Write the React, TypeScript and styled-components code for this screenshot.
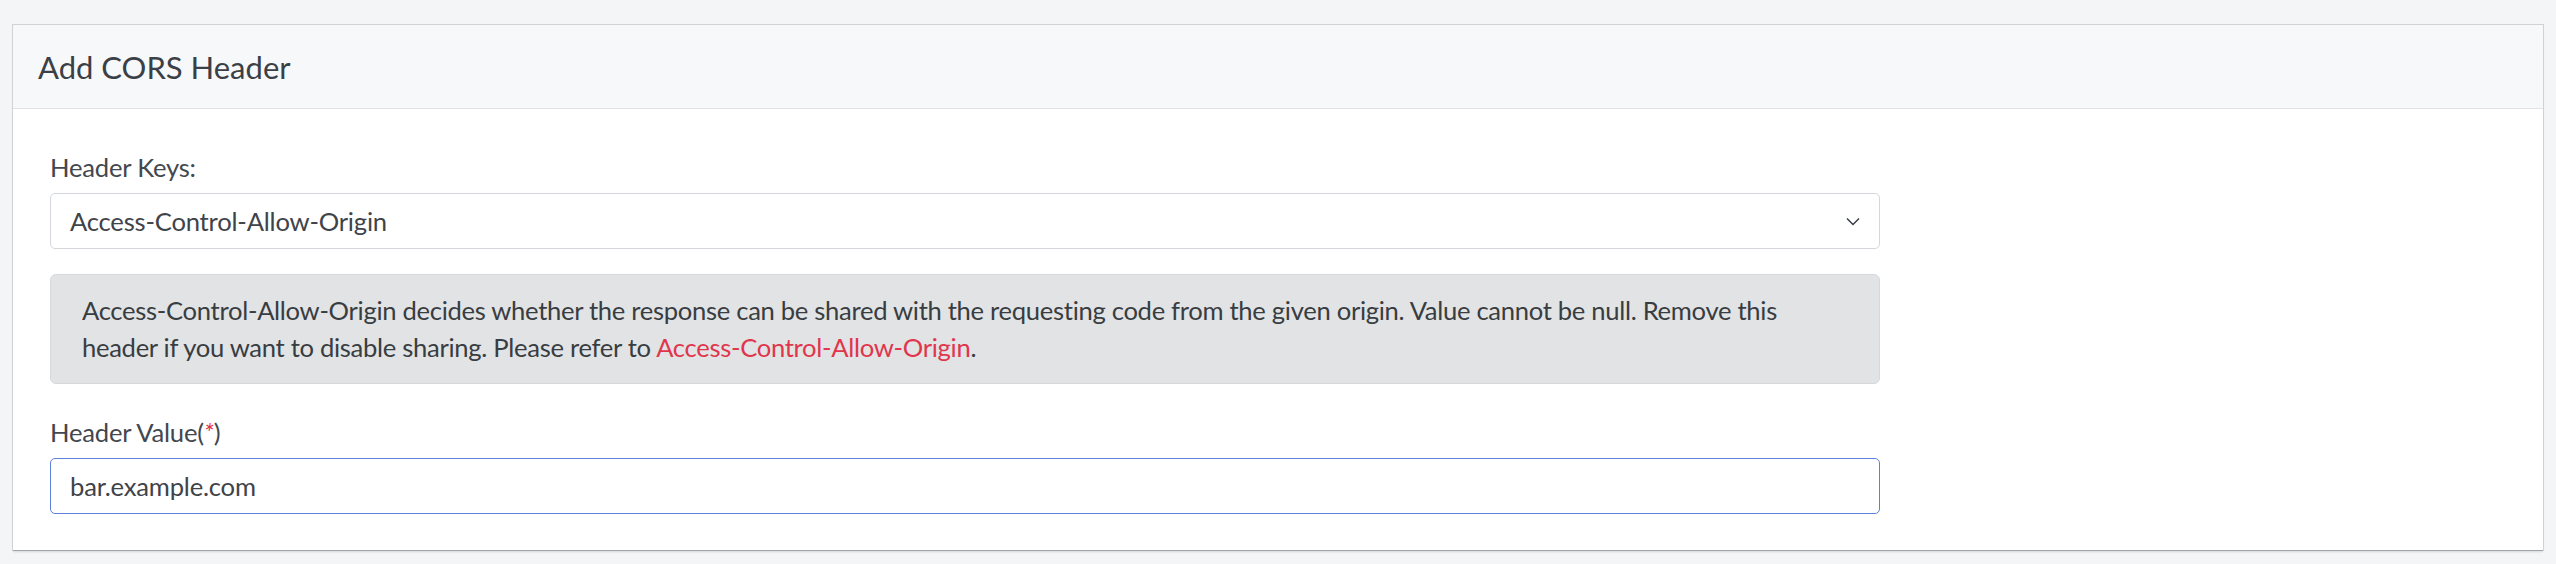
import React from "react";
import styled, { createGlobalStyle } from "styled-components";

const GlobalStyle = createGlobalStyle`
  html, body { margin: 0; padding: 0; }
  body {
    background: #f4f5f7;
    font-family: Lato, "Noto Sans", "Liberation Sans", sans-serif;
    color: #3f434a;
  }
  * { box-sizing: border-box; }
`;

const Page = styled.div`
  padding: 25px 13px 15px 13px;
`;

const Card = styled.section`
  background: #ffffff;
  box-shadow: 0 1px 0 #9ea6ab, 0 0 0 1px #cfd3d7, 0 2px 2px rgba(0, 0, 0, 0.12);
`;

const CardHeader = styled.header`
  height: 84px;
  display: flex;
  align-items: center;
  padding: 0 25px;
  background: #f7f8fa;
  border-bottom: 1px solid #dfe3e7;
`;

const Title = styled.h2`
  margin: 0;
  font-size: 31px;
  font-weight: 400;
  color: #3b3f46;
`;

const CardBody = styled.div`
  padding: 40px 38px 36px 37px;
`;

const Form = styled.div`
  width: 1830px;
  display: flex;
  flex-direction: column;
  letter-spacing: -0.2px;
`;

const Label = styled.label`
  display: block;
  font-size: 25.6px;
  line-height: 36px;
  margin-bottom: 8px;
  color: #43474e;
`;

const Required = styled.span`
  color: #e0364c;
  font-style: italic;
`;

const SelectBox = styled.div`
  position: relative;
  height: 56px;
  display: flex;
  align-items: center;
  padding: 0 19px;
  border: 1px solid #d3d7dc;
  border-radius: 5px;
  background: #fff;
  font-size: 25.6px;
  color: #3f434a;
  margin-bottom: 25px;
`;

const Chevron = styled.svg`
  position: absolute;
  right: 18px;
  top: 50%;
  transform: translateY(-50%);
  width: 16px;
  height: 16px;
`;

const Alert = styled.p`
  margin: 0 0 30px 0;
  background: #e2e3e5;
  border: 1px solid #d6d8db;
  border-radius: 6px;
  padding: 17px 31px;
  font-size: 25.6px;
  line-height: 37px;
  letter-spacing: -0.3px;
  color: #383d41;
`;

const Link = styled.a`
  color: #e0364c;
  text-decoration: none;
`;

const Input = styled.div`
  height: 56px;
  display: flex;
  align-items: center;
  padding: 0 19px;
  border: 1px solid #5f7fdd;
  border-radius: 5px;
  background: #fff;
  font-size: 25.6px;
  color: #3f434a;
`;

export default function App() {
  return (
    <>
      <GlobalStyle />
      <Page>
        <Card>
          <CardHeader>
            <Title>Add CORS Header</Title>
          </CardHeader>
          <CardBody>
            <Form>
              <Label>Header Keys:</Label>
              <SelectBox>
                <span>Access-Control-Allow-Origin</span>
                <Chevron viewBox="0 0 16 16" fill="none">
                  <path d="M2 5.5l6 6 6-6" stroke="#343a40" strokeWidth="1.4" />
                </Chevron>
              </SelectBox>
              <Alert>
                Access-Control-Allow-Origin decides whether the response can be shared with the
                requesting code from the given origin. Value cannot be null. Remove this header if
                you want to disable sharing. Please refer to{" "}
                <Link href="#">Access-Control-Allow-Origin</Link>.
              </Alert>
              <Label>
                Header Value(<Required>*</Required>)
              </Label>
              <Input>bar.example.com</Input>
            </Form>
          </CardBody>
        </Card>
      </Page>
    </>
  );
}
